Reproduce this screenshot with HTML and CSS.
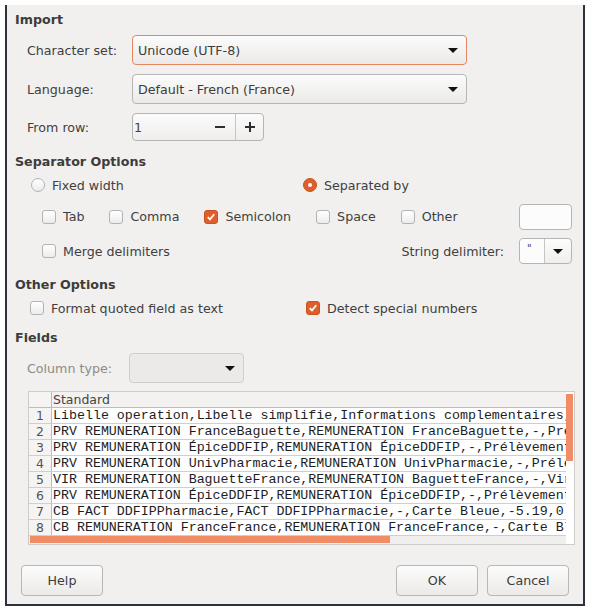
FILE: index.html
```html
<!DOCTYPE html>
<html>
<head>
<meta charset="utf-8">
<link rel="stylesheet" href="styles.css">
</head>
<body>
<div class="dialog">
  <div class="title t-import">Import</div>

  <div class="frow r-charset">
    <span class="label">Character set:</span>
    <div class="combo focus wide"><span>Unicode (UTF-8)</span><i class="arrow"></i></div>
  </div>
  <div class="frow r-lang">
    <span class="label">Language:</span>
    <div class="combo wide"><span>Default - French (France)</span><i class="arrow"></i></div>
  </div>
  <div class="frow r-from">
    <span class="label">From row:</span>
    <div class="spin">
      <span class="spin-val">1</span>
      <span class="spin-btn minus"><svg width="12" height="12" viewBox="0 0 12 12"><rect x="1" y="5" width="10" height="2" fill="#2e2e2e"/></svg></span>
      <span class="spin-btn plus"><svg width="12" height="12" viewBox="0 0 12 12"><rect x="1" y="5" width="10" height="2" fill="#2e2e2e"/><rect x="5" y="1" width="2" height="10" fill="#2e2e2e"/></svg></span>
    </div>
  </div>

  <div class="title t-sep">Separator Options</div>
  <div class="radios">
    <label class="opt opt-fixed"><i class="radio"></i>Fixed width</label>
    <label class="opt"><i class="radio on"></i>Separated by</label>
  </div>
  <div class="checks">
    <label class="opt"><i class="check"></i>Tab</label>
    <label class="opt"><i class="check"></i>Comma</label>
    <label class="opt"><i class="check on"><svg width="14" height="14" viewBox="0 0 14 14"><path d="M3.2 7.2 L5.8 9.8 L10.8 3.8" fill="none" stroke="#fff" stroke-width="2"/></svg></i>Semicolon</label>
    <label class="opt"><i class="check"></i>Space</label>
    <label class="opt"><i class="check"></i>Other</label>
    <div class="entry"></div>
  </div>
  <div class="merge">
    <label class="opt"><i class="check"></i>Merge delimiters</label>
    <span class="strdel">String delimiter:</span>
    <div class="smallcombo"><span class="sc-val">"</span><span class="sc-btn"><i class="arrow"></i></span></div>
  </div>

  <div class="title t-other">Other Options</div>
  <div class="others">
    <label class="opt opt-format"><i class="check"></i>Format quoted field as text</label>
    <label class="opt"><i class="check on"><svg width="14" height="14" viewBox="0 0 14 14"><path d="M3.2 7.2 L5.8 9.8 L10.8 3.8" fill="none" stroke="#fff" stroke-width="2"/></svg></i>Detect special numbers</label>
  </div>

  <div class="title t-fields">Fields</div>
  <div class="coltype">
    <span class="label-dis">Column type:</span>
    <div class="combo disabled"><span></span><i class="arrow"></i></div>
  </div>

  <div class="table">
    <div class="tmain">
      <div class="thead"><span class="num"></span><span class="hcell">Standard</span></div>
      <div class="trow"><span class="num">1</span><span class="cell">Libelle operation,Libelle simplifie,Informations complementaires,Type operation</span></div>
      <div class="trow"><span class="num">2</span><span class="cell">PRV REMUNERATION FranceBaguette,REMUNERATION FranceBaguette,-,Prélèvement</span></div>
      <div class="trow"><span class="num">3</span><span class="cell">PRV REMUNERATION ÉpiceDDFIP,REMUNERATION ÉpiceDDFIP,-,Prélèvement,-10</span></div>
      <div class="trow"><span class="num">4</span><span class="cell">PRV REMUNERATION UnivPharmacie,REMUNERATION UnivPharmacie,-,Prélèvement</span></div>
      <div class="trow"><span class="num">5</span><span class="cell">VIR REMUNERATION BaguetteFrance,REMUNERATION BaguetteFrance,-,Virement</span></div>
      <div class="trow"><span class="num">6</span><span class="cell">PRV REMUNERATION ÉpiceDDFIP,REMUNERATION ÉpiceDDFIP,-,Prélèvement,-10</span></div>
      <div class="trow"><span class="num">7</span><span class="cell">CB FACT DDFIPPharmacie,FACT DDFIPPharmacie,-,Carte Bleue,-5.19,0</span></div>
      <div class="trow"><span class="num">8</span><span class="cell">CB REMUNERATION FranceFrance,REMUNERATION FranceFrance,-,Carte Bleue,-3</span></div>
      <div class="hscroll"><div class="hthumb"></div></div>
    </div>
    <div class="vscroll"><div class="vthumb"></div></div>
  </div>

  <div class="buttons">
    <button class="btn">Help</button>
    <span class="spacer"></span>
    <button class="btn">OK</button>
    <button class="btn">Cancel</button>
  </div>
</div>
</body>
</html>
```

FILE: styles.css
```css
* { box-sizing: border-box; }
html, body { margin: 0; padding: 0; background: #ffffff; }
body {
  font-family: "DejaVu Sans", "Noto Sans", sans-serif;
  font-size: 12.67px;
  color: #3f3f3f;
}
.dialog {
  margin: 5px 0 0 5px;
  width: 580px;
  height: 601px;
  background: #f1f0ee;
  border-left: 2px solid #2d323c;
  border-right: 2px solid #2d323c;
  border-bottom: 2px solid #2d323c;
  padding-top: 5px;
  display: flex;
  flex-direction: column;
}
.title {
  font-weight: bold;
  height: 20px;
  line-height: 20px;
  padding-left: 8px;
  color: #3c3c3c;
}
.t-sep { margin-top: 11px; }
.t-other { margin-top: 11px; }
.t-fields { margin-top: 10px; }

.frow {
  display: flex;
  align-items: center;
  padding-left: 20px;
}
.r-charset { margin-top: 5px; height: 30px; }
.r-lang { margin-top: 9px; height: 30px; }
.r-from { margin-top: 9px; height: 28px; }
.label { width: 105px; }

.combo {
  position: relative;
  height: 30px;
  border: 1px solid #b5b5b5;
  border-radius: 4px;
  background: linear-gradient(#fbfbfb, #ebeae8);
  display: flex;
  align-items: center;
  padding-left: 5px;
  color: #3c3c3c;
}
.combo.wide { width: 335px; }
.combo.focus { border-color: #e2875f; }
.combo span { flex: 1; }
.arrow {
  display: block;
  width: 0; height: 0;
  border-left: 5px solid transparent;
  border-right: 5px solid transparent;
  border-top: 5px solid #111;
  margin-right: 8px;
}

.spin {
  width: 132px;
  height: 28px;
  border: 1px solid #b5b5b5;
  border-radius: 4px;
  background: linear-gradient(#fbfbfb, #efeeec);
  display: flex;
  align-items: center;
}
.spin-val { flex: 1; padding-left: 1px; }
.spin-btn {
  width: 28px;
  height: 26px;
  display: flex;
  align-items: center;
  justify-content: center;
}
.spin-btn.minus { width: 31px; }
.spin-btn.plus { border-left: 1px solid #c6c5c3; }

.opt {
  display: flex;
  align-items: center;
  white-space: nowrap;
}
.radios {
  margin-top: 3px;
  height: 20px;
  display: flex;
  align-items: center;
  padding-left: 24px;
}
.opt-fixed { width: 272px; }
.radio {
  width: 14px; height: 14px;
  border-radius: 50%;
  border: 1px solid #b3b3b3;
  background: linear-gradient(#ffffff, #ebebeb);
  margin-right: 7px;
  position: relative;
}
.radio.on {
  background: #df5f2c;
  border-color: #c9531f;
}
.radio.on::after {
  content: "";
  position: absolute;
  left: 4px; top: 4px;
  width: 4px; height: 4px;
  border-radius: 50%;
  background: #fff;
}
.check {
  width: 14px; height: 14px;
  border-radius: 3px;
  border: 1px solid #b3b3b3;
  background: linear-gradient(#ffffff, #ececec);
  margin-right: 7px;
  display: flex;
  align-items: center;
  justify-content: center;
}
.check.on {
  background: #df5f2c;
  border-color: #c9531f;
}
.check svg { display: block; }
.checks {
  margin-top: 9px;
  height: 25px;
  display: flex;
  align-items: center;
  padding-left: 35px;
  padding-right: 11px;
  gap: 25px;
}
.entry {
  margin-left: auto;
  width: 53px;
  height: 26px;
  border: 1px solid #b5b5b5;
  border-radius: 4px;
  background: #fcfcfc;
}
.merge {
  margin-top: 9px;
  height: 26px;
  display: flex;
  align-items: center;
  padding-left: 35px;
  padding-right: 11px;
}
.strdel { margin-left: auto; margin-right: 15px; }
.smallcombo {
  width: 53px;
  height: 26px;
  border: 1px solid #b5b5b5;
  border-radius: 4px;
  background: linear-gradient(#fdfdfd, #efeeec);
  display: flex;
  align-items: stretch;
}
.sc-val {
  width: 24px;
  font-size: 10px;
  padding-left: 7px;
  padding-top: 4px;
  background: #fcfcfc;
  border-radius: 4px 0 0 4px;
}
.sc-btn {
  flex: 1;
  border-left: 1px solid #c6c5c3;
  display: flex;
  align-items: center;
  justify-content: center;
}
.sc-btn .arrow { margin: 0; }

.others {
  margin-top: 3px;
  height: 20px;
  display: flex;
  align-items: center;
  padding-left: 23px;
}
.opt-format { width: 276px; }

.coltype {
  margin-top: 5px;
  height: 30px;
  display: flex;
  align-items: center;
  padding-left: 20px;
}
.label-dis { width: 102px; color: #8c8b89; }
.combo.disabled {
  width: 115px;
  background: #ebeae8;
  border-color: #cfcecc;
}

.table {
  margin: 8px 8px 0 21px;
  height: 154px;
  border: 1px solid #cdcccb;
  display: flex;
  background: #f5f4f3;
}
.tmain {
  flex: 1;
  display: flex;
  flex-direction: column;
  overflow: hidden;
}
.thead, .trow {
  display: flex;
  height: 16px;
  align-items: stretch;
  white-space: nowrap;
}
.thead { height: 16px; border-bottom: 1px solid #bdbcbb; background: #f3f2f1; }
.trow { height: 16.2px; border-bottom: 1px solid #cfcfcf; background: #fff; }
.num {
  width: 23px;
  flex: none;
  border-right: 1px solid #bdbcbb;
  text-align: right;
  padding-right: 7px;
  color: #555;
  font-size: 12.5px;
  line-height: 15px;
  background: #f5f4f3;
}
.hcell {
  padding-left: 1px;
  line-height: 15px;
  font-size: 12.5px;
  color: #444;
}
.cell {
  padding-left: 1px;
  font-family: "Liberation Mono", "DejaVu Sans Mono", monospace;
  font-size: 13.3px;
  line-height: 15px;
  color: #1d1d1d;
  overflow: hidden;
  flex: 1;
}
.hscroll {
  margin-top: auto;
  height: 8px;
  padding-left: 1px;
  background: #f0efee;
}
.hthumb {
  width: 360px;
  height: 7px;
  background: #f08d67;
}
.vscroll {
  width: 8px;
  flex: none;
  background: #ffffff;
  padding-top: 2px;
}
.vthumb {
  width: 7px;
  height: 67px;
  background: #f08d67;
}

.buttons {
  margin-top: 20px;
  height: 31px;
  display: flex;
  padding: 0 14px;
  gap: 9px;
}
.spacer { flex: 1; }
.btn {
  width: 82px;
  height: 31px;
  border: 1px solid #b8b7b5;
  border-radius: 4px;
  background: linear-gradient(#fcfcfc, #ebeae8);
  font-family: "DejaVu Sans", sans-serif;
  font-size: 12.67px;
  color: #3c3c3c;
  padding: 0;
}
```
